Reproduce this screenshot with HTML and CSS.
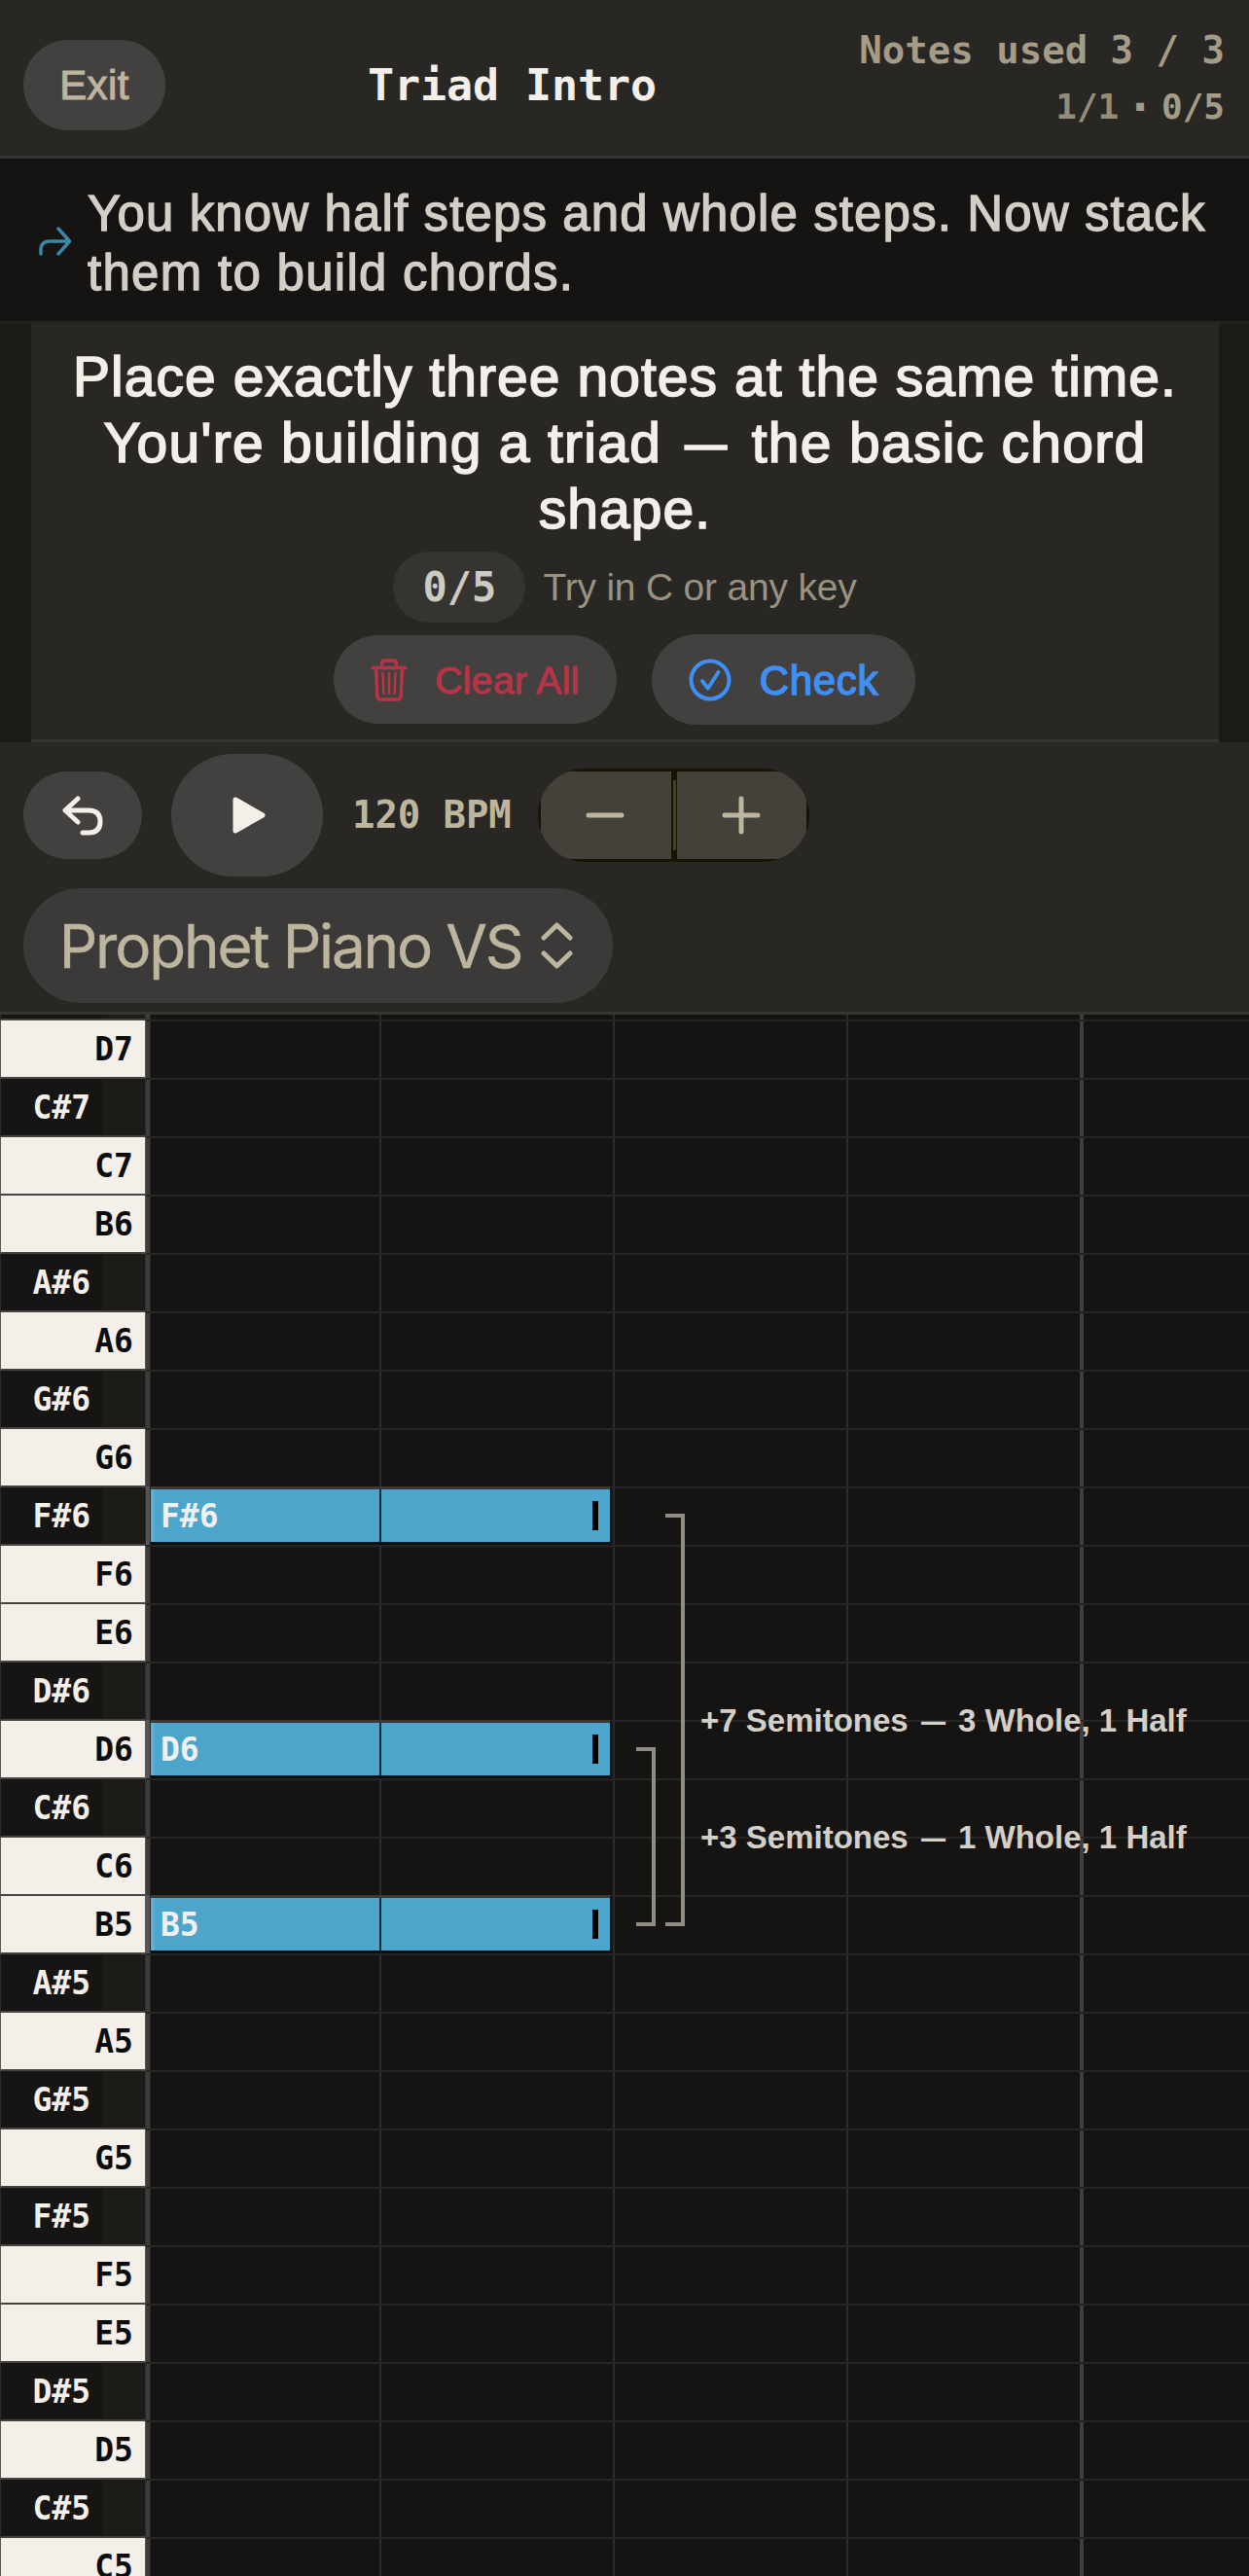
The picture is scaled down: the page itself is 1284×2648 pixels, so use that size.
FILE: index.html
```html
<!DOCTYPE html>
<html lang="en">
<head>
  <meta charset="UTF-8">
  <meta name="viewport" content="width=device-width, initial-scale=1">
  <title>Triad Intro</title>
  <link rel="stylesheet" href="styles.css">
</head>
<body>
  <header class="topbar">
    <div class="topbar-side">
      <button class="pill exit-btn">Exit</button>
    </div>
    <h1>Triad Intro</h1>
    <div class="topbar-side stats">
      <div class="notes-used">Notes used 3 / 3</div>
      <div class="progress"><span class="dim">1/1</span><span class="dot">·</span><span>0/5</span></div>
    </div>
  </header>

  <div class="intro">
    <svg class="intro-icon" width="36" height="32" viewBox="0 0 36 32">
      <path d="M3 29v-4q0-9 9-9h20M21 3l11.500 13L21 29"/>
    </svg>
    <p>You know half steps and whole steps. Now stack<br><span class="wide">them to build chords.</span></p>
  </div>

  <section class="task-wrap">
    <div class="task">
      <h2>Place exactly three notes at the same time.<br><span class="wide">You're building a triad <span class="dash">—</span> the basic chord</span><br>shape.</h2>
      <div class="hint-row">
        <span class="score">0/5</span>
        <span class="hint">Try in C or any key</span>
      </div>
      <div class="actions">
        <button class="pill clear-btn">
          <svg width="38" height="44" viewBox="0 0 38 44">
            <path d="M2 9.5h34M11.500 9V5q0-3 3-3h9q3 0 3 3v4M5.500 10l1.300 28.500q.2 3.500 3.500 3.500h17.400q3.300 0 3.500-3.500L32.500 10"/>
            <path class="thin" d="M12.500 15l.8 21M19 15v21M25.500 15l-.8 21"/>
          </svg>
          <span>Clear All</span>
        </button>
        <button class="pill check-btn">
          <svg width="44" height="44" viewBox="0 0 44 44">
            <circle cx="22" cy="22" r="19.500"/>
            <path d="M14 23l5.800 7.500L30.500 14"/>
          </svg>
          <span>Check</span>
        </button>
      </div>
    </div>
  </section>

  <section class="toolbar">
    <div class="transport">
      <button class="pill undo-btn">
        <svg width="42" height="42" viewBox="0 0 42 42">
          <path d="M16 4L3 16l13 12M3 16h24q12 0 12 11.500T27 39h-6"/>
        </svg>
      </button>
      <button class="pill play-btn">
        <svg width="34" height="38" viewBox="0 0 34 38">
          <path d="M3 3v32L31 19z"/>
        </svg>
      </button>
      <span class="bpm">120 BPM</span>
      <div class="stepper">
        <button class="step">
          <svg width="40" height="40" viewBox="0 0 40 40"><path d="M3 20h34"/></svg>
        </button>
        <i class="split"></i>
        <button class="step">
          <svg width="40" height="40" viewBox="0 0 40 40"><path d="M3 20h34M20 3v34"/></svg>
        </button>
      </div>
    </div>
    <button class="pill picker">
      <span>Prophet Piano VS</span>
      <svg width="33" height="48" viewBox="0 0 33 48">
        <path d="M3 16L16.500 3 30 16M3 32l13.500 13L30 32"/>
      </svg>
    </button>
  </section>

  <main class="roll">
    <div class="rows" id="rows"></div>
    <div class="interval outer"></div>
    <div class="interval inner"></div>
    <div class="interval-label label-7">+7 Semitones <span class="dash">—</span> 3 Whole, 1 Half</div>
    <div class="interval-label label-3">+3 Semitones <span class="dash">—</span> 1 Whole, 1 Half</div>
  </main>

  <script>
    const names = ['C', 'C#', 'D', 'D#', 'E', 'F', 'F#', 'G', 'G#', 'A', 'A#', 'B'];
    const placed = ['F#6', 'D6', 'B5'];
    const highest = 7 * 12 + 3;
    const lowest = 5 * 12;
    let html = '';

    // highest pitch first, down to C5
    for (let n = highest; n >= lowest; n--) {
      const pitch = names[n % 12] + Math.floor(n / 12);
      const kind = pitch.includes('#') ? 'black' : 'white';
      // top row is scrolled almost out of view, no label
      const label = n === highest ? '&nbsp;' : pitch;
      const note = placed.includes(pitch) ? `<div class="note"><span>${pitch}</span></div>` : '';
      html += `<div class="row"><div class="key ${kind}"><span>${label}</span></div><div class="lane">${note}</div></div>`;
    }

    document.getElementById('rows').innerHTML = html;
  </script>
</body>
</html>
```
FILE: styles.css
```css
* {
  box-sizing: border-box;
}

body {
  margin: 0;
  width: 1284px;
  height: 2648px;
  overflow: hidden;
  display: flex;
  flex-direction: column;
  background: #151412;
  color: #f4efe9;
  font-family: "Liberation Sans", Arial, sans-serif;
}

h1, h2, p {
  margin: 0;
}

button {
  border: none;
  padding: 0;
  margin: 0;
  background: none;
  color: inherit;
  font: inherit;
}

svg {
  display: block;
  flex: none;
  fill: none;
  stroke: currentColor;
  stroke-width: 5;
  stroke-linecap: round;
  stroke-linejoin: round;
}

.pill {
  display: flex;
  align-items: center;
  justify-content: center;
  border-radius: 60px;
  background: #42413f;
  white-space: nowrap;
}

.dash {
  display: inline-block;
  transform: scaleX(0.76);
}

/* header */
.topbar {
  height: 163px;
  flex: none;
  display: flex;
  align-items: center;
  padding: 12px 24px 0;
  border-bottom: 3px solid #363533;
  background: #282724;
}

.topbar-side {
  width: 352px;
}

.exit-btn {
  width: 146px;
  height: 93px;
  margin-top: 3px;
  color: #beb59e;
  font-size: 42px;
  letter-spacing: 0.4px;
  -webkit-text-stroke: 1px;
}

h1 {
  flex: 1;
  font: bold 45px/56px "DejaVu Sans Mono", monospace;
  letter-spacing: -0.1px;
  padding: 3px 0 0 2px;
}

.stats {
  width: 420px;
  padding-right: 1px;
  font-family: "DejaVu Sans Mono", monospace;
  font-weight: bold;
  color: #a49c87;
  text-align: right;
}

.notes-used {
  font-size: 39px;
  line-height: 56px;
  margin-top: -9px;
}

.progress {
  display: flex;
  justify-content: flex-end;
  gap: 11px;
  font-size: 36px;
  line-height: 60px;
}

.dim {
  color: #948c78;
}

.dot {
  -webkit-text-stroke: 2px;
}

/* intro strip */
.intro {
  height: 170px;
  flex: none;
  display: flex;
  align-items: center;
  padding: 7px 0 0 39px;
  border-bottom: 3px solid #242321;
}

.intro-icon {
  color: #3a88a8;
  stroke-width: 3.5;
  margin: -4px 15px 0 0;
}

.intro p {
  font-size: 51px;
  line-height: 61px;
  color: #d3cfc7;
  white-space: nowrap;
  letter-spacing: 1.12px;
  -webkit-text-stroke: 1.3px;
}

/* task card */
.task-wrap {
  height: 430px;
  flex: none;
  padding: 0 31px 0 32px;
  background: #1b1a16;
}

.task {
  height: 430px;
  padding-top: 20px;
  border-bottom: 3px solid #363531;
  background: #282724;
}

h2 {
  font-size: 57px;
  line-height: 68px;
  font-weight: normal;
  text-align: center;
  white-space: nowrap;
  letter-spacing: 1.05px;
  -webkit-text-stroke: 1.6px;
}

.wide {
  letter-spacing: 1.28px;
}

.hint-row {
  display: flex;
  align-items: center;
  justify-content: center;
  gap: 18px;
  margin-top: 10px;
}

.score {
  width: 136px;
  height: 73px;
  border-radius: 37px;
  background: #353430;
  color: #cdcac4;
  font: bold 42px/73px "DejaVu Sans Mono", monospace;
  text-align: center;
}

.hint {
  font-size: 39px;
  letter-spacing: -0.2px;
  padding-top: 1px;
  color: #9a9280;
}

.actions {
  display: flex;
  align-items: center;
  justify-content: center;
  gap: 36px;
  margin-top: 12px;
  padding-right: 1px;
}

.clear-btn {
  width: 291px;
  height: 91px;
  gap: 28px;
  color: #b73446;
  font-size: 39px;
  letter-spacing: 0.35px;
  -webkit-text-stroke: 1px;
}

.clear-btn span,
.check-btn span {
  padding-top: 2px;
}

.clear-btn svg {
  stroke-width: 3.5;
}

.clear-btn .thin {
  stroke-width: 2.5;
}

.check-btn {
  width: 271px;
  height: 93px;
  gap: 29px;
  color: #3f8ff7;
  font-size: 42px;
  letter-spacing: 0.7px;
  -webkit-text-stroke: 1.4px;
}

.check-btn svg {
  stroke-width: 4;
}

/* transport */
.toolbar {
  height: 280px;
  flex: none;
  padding: 12px 24px 0;
  border-bottom: 3px solid #363531;
  background: #282724;
}

.transport {
  display: flex;
  align-items: center;
  height: 126px;
}

.undo-btn {
  width: 122px;
  height: 90px;
  margin-right: 30px;
}

.play-btn {
  width: 156px;
  height: 126px;
  border-radius: 63px;
  margin-right: 30px;
  padding-left: 4px;
}

.play-btn svg {
  fill: currentColor;
}

.bpm {
  width: 191px;
  font: bold 39px/50px "DejaVu Sans Mono", monospace;
  letter-spacing: -0.1px;
  color: #beb59e;
}

.stepper {
  width: 279px;
  height: 96px;
  display: flex;
  padding: 3px;
  overflow: hidden;
  border-radius: 48px;
  background: #1a1203;
  color: #beb59e;
}

.step {
  flex: 1;
  display: flex;
  align-items: center;
  justify-content: center;
  background: #44413a;
}

.split {
  width: 3px;
  height: 72px;
  margin: 9px 1px 0 2px;
  background: #463d26;
}

.step:first-child svg {
  margin-left: -2px;
}

.picker {
  width: 606px;
  height: 118px;
  margin-top: 12px;
  gap: 20px;
  padding-right: 4px;
  background: #3b3a38;
  color: #beb59e;
  font-family: Inter, sans-serif;
  font-size: 62px;
  letter-spacing: -2.2px;
  -webkit-text-stroke: 0.4px;
}

/* piano roll */
.roll {
  position: relative;
  flex: 1;
  overflow: hidden;
}

.rows {
  margin-top: -54px;
}

.row {
  height: 60px;
  display: flex;
}

.key {
  width: 150px;
  height: 60px;
  flex: none;
  border: solid #5a5752;
  border-width: 0 1px 2px;
  border-bottom-color: #464440;
  font: bold 33px/60px "DejaVu Sans Mono", monospace;
}

.key span {
  display: block;
  height: 58px;
  text-align: right;
}

.white {
  background: #f4efe9;
  color: #0c0c0c;
}

.white span {
  padding-right: 12px;
}

.black {
  background: #1c1b17;
  border-color: #2c2b29;
  border-bottom-color: #464440;
}

.black span {
  width: 104px;
  padding-right: 12px;
  background: #161513;
}

/* lanes sit 1px below the keys; the bar line is on the fourth beat */
.lane {
  flex: 1;
  height: 60px;
  margin-top: 1px;
  padding-left: 5px;
  border-bottom: 2px solid #252524;
  background:
    linear-gradient(90deg, #3c3c3c 4px, #262624 4px, #262624 5px, transparent 5px),
    linear-gradient(#3e3e3e, #3e3e3e) 960px 0 / 4px 100% no-repeat,
    repeating-linear-gradient(90deg, #2a2a2a 0 2px, transparent 2px 240px);
}

.note {
  width: 472px;
  height: 60px;
  margin-top: -2px;
  padding-left: 10px;
  position: relative;
  border-top: 3px solid #3a3938;
  border-bottom: 3px solid #0d0e0f;
  background:
    linear-gradient(#000, #000) 454px 12px / 6px 30px no-repeat,
    linear-gradient(#1c2a30, #1c2a30) 235px 0 / 2px 100% no-repeat,
    linear-gradient(90deg, #5bb1d6 4px, #4ca6cc 4px);
  color: #f0f0f0;
  font: bold 33px/56px "DejaVu Sans Mono", monospace;
}

/* note start edge spills over the bar line */
.note::before {
  content: "";
  position: absolute;
  left: -5px;
  top: -3px;
  width: 4px;
  height: 60px;
  background: #555;
}

.interval {
  position: absolute;
  width: 20px;
  border: 4px solid #8f8c84;
  border-left: none;
}

.outer {
  left: 684px;
  top: 513px;
  height: 424px;
}

.inner {
  left: 654px;
  top: 753px;
  height: 184px;
}

.interval-label {
  position: absolute;
  left: 720px;
  color: #d5cfc9;
  font-size: 33px;
  line-height: 40px;
  font-weight: bold;
  white-space: nowrap;
}

.label-7 {
  top: 706px;
}

.label-3 {
  top: 826px;
}
```
